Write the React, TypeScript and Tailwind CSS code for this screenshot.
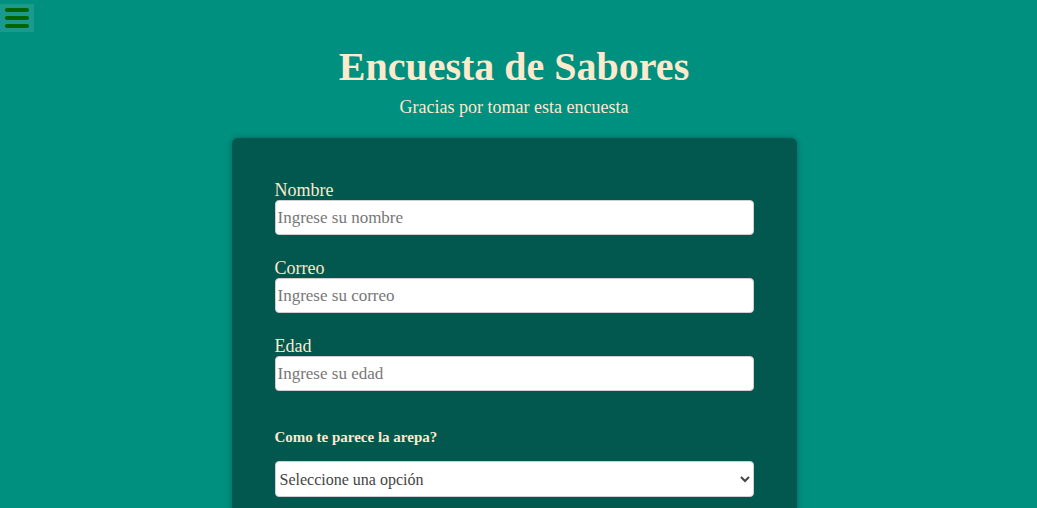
import React from "react";

const fields = [
  { label: "Nombre", placeholder: "Ingrese su nombre", type: "text" },
  { label: "Correo", placeholder: "Ingrese su correo", type: "email" },
  { label: "Edad", placeholder: "Ingrese su edad", type: "number" },
];

export default function App() {
  return (
    <div className="relative min-h-[508px] overflow-hidden bg-[#009080] font-['Liberation_Serif',serif]">
      <button className="absolute left-0 top-[4px] flex h-[28px] w-[34px] flex-col items-center justify-center gap-[4px] bg-[#1a9a8a]">
        <span className="h-[4px] w-[24px] rounded-full bg-[#006400]" />
        <span className="h-[4px] w-[24px] rounded-full bg-[#006400]" />
        <span className="h-[4px] w-[24px] rounded-full bg-[#006400]" />
      </button>

      <div className="flex flex-col items-center pr-[9px] pt-[42px]">
        <h1 className="text-[40px] font-bold leading-[50px] text-[#fde9cc]">
          Encuesta de Sabores
        </h1>
        <p className="mt-[4px] text-[18px] leading-[22px] text-[#fde9cc]">
          Gracias por tomar esta encuesta
        </p>

        <form className="mt-[20px] w-[565px] rounded-[6px] bg-[#02574f] px-[43px] pt-[42px] pb-[40px] shadow-[0_0_6px_rgba(0,0,0,0.3)]">
          {fields.map((f) => (
            <div key={f.label} className="mb-[23px]">
              <label className="block text-[18px] leading-[20px] text-[#fde9cc]">
                {f.label}
              </label>
              <input
                type={f.type}
                placeholder={f.placeholder}
                className="block h-[35px] w-full rounded-[4px] border border-[#cfcfcf] bg-white px-[2px] text-[17px] text-[#333] placeholder:text-[#777] outline-none"
              />
            </div>
          ))}

          <p className="mt-[37px] text-[15px] font-bold leading-[18px] text-[#fde9cc]">
            Como te parece la arepa?
          </p>
          <select className="mt-[15px] block h-[36px] w-full rounded-[4px] border border-[#cfcfcf] bg-white px-0 text-[16px] text-[#444]">
            <option>Seleccione una opción</option>
            <option>Buena</option>
            <option>Regular</option>
            <option>Mala</option>
          </select>
        </form>
      </div>
    </div>
  );
}
